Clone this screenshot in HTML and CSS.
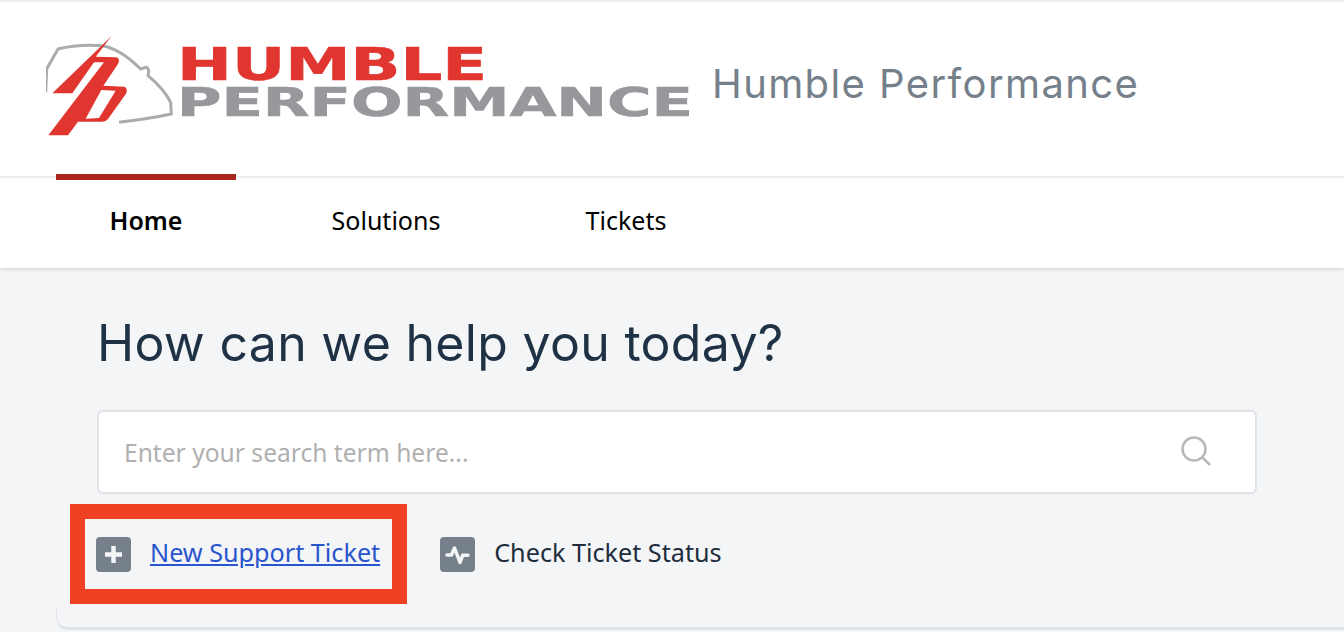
FILE: index.html
```html
<!DOCTYPE html>
<html>
<head>
<meta charset="UTF-8">
<title>Humble Performance</title>
<link rel="stylesheet" href="styles.css">
</head>
<body>
<header class="head">
  <div class="brand">
    <svg class="logo" width="646" height="100" viewBox="46 36 646 100">
      <g class="logoArt" transform="translate(44 34) scale(.3333)">
        <path class="logoLine" d="M5 175L8 105L42 45Q100 30 175 35Q230 45 290 105L305 100Q318 102 312 125Q360 165 380 205L382 240Q310 255 225 265"/>
        <path class="logoRed" fill-rule="evenodd" d="M203 6L155 68L215 70Q230 72 222 90L178 155L240 158Q252 162 247 178L192 255Q186 263 175 263L102 263L72 304L13 304L180 85L150 85L85 178L25 178Z M172 168L215 170L165 252L125 254Z"/>
      </g>
      <g class="logoArt">
        <text class="logoText logoTop" x="177" y="79.5" textLength="310" lengthAdjust="spacingAndGlyphs">HUMBLE</text>
        <text class="logoText logoBottom" x="177" y="115.5" textLength="516" lengthAdjust="spacingAndGlyphs">PERFORMANCE</text>
      </g>
    </svg>
    <span class="brandName">Humble Performance</span>
  </div>
  <nav class="tabs">
    <a class="tab active">Home</a>
    <a class="tab">Solutions</a>
    <a class="tab">Tickets</a>
  </nav>
</header>
<main class="hero">
  <h1>How can we help you today?</h1>
  <div class="search">
    <span class="placeholder">Enter your search term here...</span>
    <svg width="32" height="32" viewBox="0 0 32 32" class="searchIcon"><circle cx="13" cy="13" r="11.5"/><path d="M21.5 21.5L29 29"/></svg>
  </div>
  <div class="links">
    <div class="marked">
      <span class="iconBox"><svg width="35" height="35" viewBox="0 0 35 35"><path d="M17.5 9V26M9 17.5H26"/></svg></span>
      <a class="newTicket">New Support Ticket</a>
    </div>
    <div class="status">
      <span class="iconBox"><svg width="35" height="35" viewBox="0 0 35 35"><path class="pulse" d="M7 18H11.5L14.5 11L20 25.5L22.7 18.3H28"/></svg></span>
      <a class="statusLink">Check Ticket Status</a>
    </div>
  </div>
</main>
<div class="card"></div>
</body>
</html>
```
FILE: styles.css
```css
html, body{
margin: 0;
height: 632px;
overflow: hidden;
}

body{
background: #f3f5f7;
font-family: "Noto Sans", sans-serif;
color: #1f2d3d;
}

.head{
background: #fff;
border-top: 2px solid #ebeef0;
height: 266px;
box-shadow: 0 1px 4px rgba(0,0,0,.15);
}

.brand{
display: flex;
align-items: center;
height: 176px;
padding-left: 46px;
box-sizing: border-box;
border-bottom: 2px solid #e8ebef;
}

.logo{
flex: none;
margin-top: -6px;
}

.logoArt{
filter: blur(.5px);
}

.logoLine{
fill: none;
stroke: #a9abae;
stroke-width: 9;
}

.logoRed{
fill: #e1352f;
}

.logoText{
font-family: "DejaVu Sans", sans-serif;
font-weight: bold;
stroke-width: .6;
}

.logoTop{
font-size: 44px;
fill: #e1352f;
stroke: #e1352f;
}

.logoBottom{
font-size: 39px;
fill: #96989c;
stroke: #96989c;
}

.brandName{
font-family: "Inter", sans-serif;
font-size: 40px;
letter-spacing: 1.4px;
line-height: 44px;
color: #75808b;
margin: -10px 0 0 20px;
}

.tabs{
display: flex;
padding-left: 56px;
}

.tab{
width: 180px;
height: 89px;
margin-right: 60px;
margin-top: -4px;
border-top: 6px solid transparent;
text-align: center;
font-size: 25px;
line-height: 80px;
color: #000;
}

.tab.active{
border-top-color: #a8261b;
font-weight: 600;
}

.hero{
padding: 41px 87px 0 97px;
}

h1{
margin: 0;
font-family: "Inter", sans-serif;
font-weight: 400;
font-size: 50px;
letter-spacing: .3px;
line-height: 68px;
color: #1f3245;
}

.search{
display: flex;
align-items: center;
justify-content: space-between;
box-sizing: border-box;
height: 84px;
margin-top: 33px;
padding: 0 42px 0 25px;
background: #fff;
border: 2px solid #dfe2e6;
border-radius: 6px;
}

.placeholder{
font-size: 24.6px;
line-height: 32px;
padding-top: 1px;
color: #b0b0b0;
}

.searchIcon{
fill: none;
stroke: #b8b8b8;
stroke-width: 2.5;
}

.links{
display: flex;
align-items: center;
margin: 10px 0 0 -27px;
font-size: 25.2px;
}

.marked, .status{
display: flex;
align-items: center;
}

.marked{
border: 15px solid #f04124;
height: 70px;
padding: 0 12px 0 11px;
gap: 19px;
}

.status{
margin-left: 33px;
gap: 19px;
}

.newTicket, .statusLink{
padding-bottom: 4px;
}

.newTicket{
color: #2a55cc;
text-decoration: underline;
}

.iconBox{
display: block;
width: 35px;
height: 35px;
border-radius: 4px;
background: #75808b;
}

.iconBox svg{
display: block;
fill: none;
stroke: #f3f5f7;
stroke-width: 4.5;
}

.iconBox .pulse{
stroke-width: 3.5;
stroke-linecap: round;
stroke-linejoin: round;
}

.card{
height: 20px;
margin: 3px 0 0 56px;
border-bottom: 3px solid #dfe2e6;
border-left: 1px solid #e6e8eb;
border-radius: 0 0 0 12px;
}
```
